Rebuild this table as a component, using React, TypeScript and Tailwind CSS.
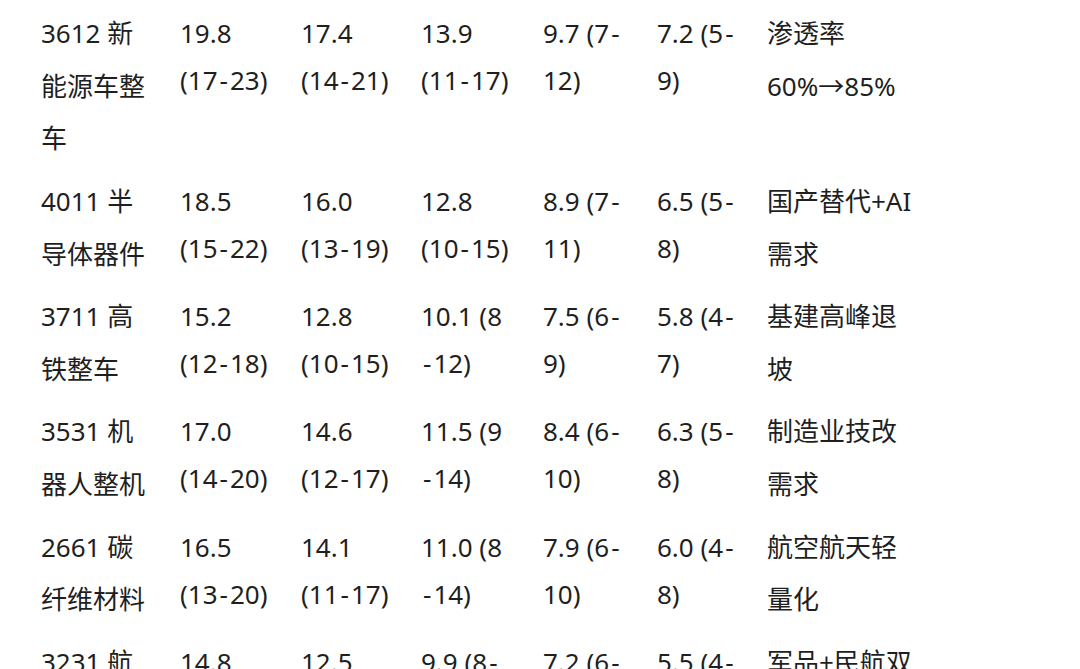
const rows: string[][][] = [
  [
    ["3612 新", "能源车整", "车"],
    ["19.8", "(17-23)"],
    ["17.4", "(14-21)"],
    ["13.9", "(11-17)"],
    ["9.7 (7-", "12)"],
    ["7.2 (5-", "9)"],
    ["渗透率", "60%→85%"],
  ],
  [
    ["4011 半", "导体器件"],
    ["18.5", "(15-22)"],
    ["16.0", "(13-19)"],
    ["12.8", "(10-15)"],
    ["8.9 (7-", "11)"],
    ["6.5 (5-", "8)"],
    ["国产替代+AI", "需求"],
  ],
  [
    ["3711 高", "铁整车"],
    ["15.2", "(12-18)"],
    ["12.8", "(10-15)"],
    ["10.1 (8", "-12)"],
    ["7.5 (6-", "9)"],
    ["5.8 (4-", "7)"],
    ["基建高峰退", "坡"],
  ],
  [
    ["3531 机", "器人整机"],
    ["17.0", "(14-20)"],
    ["14.6", "(12-17)"],
    ["11.5 (9", "-14)"],
    ["8.4 (6-", "10)"],
    ["6.3 (5-", "8)"],
    ["制造业技改", "需求"],
  ],
  [
    ["2661 碳", "纤维材料"],
    ["16.5", "(13-20)"],
    ["14.1", "(11-17)"],
    ["11.0 (8", "-14)"],
    ["7.9 (6-", "10)"],
    ["6.0 (4-", "8)"],
    ["航空航天轻", "量化"],
  ],
  [
    ["3231 航", "空装备"],
    ["14.8", "(12-18)"],
    ["12.5", "(10-15)"],
    ["9.9 (8-", "12)"],
    ["7.2 (6-", "9)"],
    ["5.5 (4-", "7)"],
    ["军品+民航双", "轮驱动"],
  ],
];

const widths = ["w-[139px]", "w-[121px]", "w-[120px]", "w-[122px]", "w-[114px]", "w-[110px]", "w-[200px]"];

// the dash in the ranges sits a little wider than a plain hyphen
function Line({ text }: { text: string }) {
  const parts = text.split("-");
  return (
    <div>
      {parts.map((p, i) => (
        <span key={i}>
          {i > 0 && <span className="mx-[2px]">-</span>}
          {p}
        </span>
      ))}
    </div>
  );
}

export default function App() {
  return (
    <div
      className="min-h-screen bg-white pt-[2px] pl-[41px] text-[26px] text-[#1f1f1f]"
      style={{ fontFamily: '"Noto Sans", "Noto Sans CJK SC", sans-serif' }}
    >
      <table className="border-collapse">
        <tbody>
          {rows.map((row, i) => (
            <tr key={i}>
              {row.map((cell, j) => {
                const cjk = j === 0 || j === 6;
                return (
                  <td
                    key={j}
                    className={`${widths[j]} p-0 py-[4.875px] align-baseline whitespace-nowrap ${
                      cjk ? "leading-[52.75px]" : "leading-[47px]"
                    }`}
                  >
                    {cell.map((line, k) => (
                      <Line key={k} text={line} />
                    ))}
                  </td>
                );
              })}
            </tr>
          ))}
        </tbody>
      </table>
    </div>
  );
}
